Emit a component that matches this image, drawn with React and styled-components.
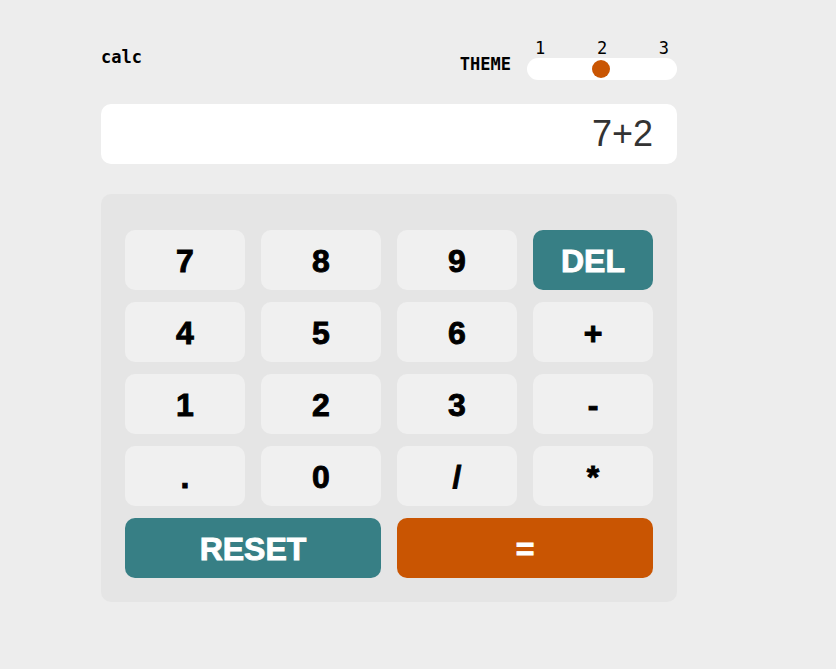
import React, { useState } from 'react';
import styled, { createGlobalStyle } from 'styled-components';

const GlobalStyle = createGlobalStyle`
  html, body {
    margin: 0;
    padding: 0;
    background: #ededed;
  }
`;

const Page = styled.div`
  width: 576px;
  margin-left: 101px;
  padding-top: 38px;
  font-family: 'Liberation Sans', Arial, sans-serif;
`;

const Header = styled.header`
  display: flex;
  justify-content: space-between;
  align-items: flex-start;
  font-family: 'DejaVu Sans Mono', monospace;
  font-size: 17px;
  color: #000;
`;

const Title = styled.h1`
  margin: 0;
  padding-top: 9px;
  font-size: 17px;
  line-height: 20px;
  font-weight: bold;
`;

const ThemeSwitch = styled.div`
  display: flex;
  align-items: flex-end;
  gap: 16px;
`;

const ThemeLabel = styled.span`
  font-weight: bold;
  line-height: 20px;
  margin-bottom: 6px;
`;

const Toggle = styled.div`
  width: 150px;
  display: flex;
  flex-direction: column;
`;

const Numbers = styled.div`
  display: flex;
  justify-content: space-between;
  padding: 0 8px 0 8px;
  line-height: 20px;
`;

const Track = styled.div`
  position: relative;
  height: 22px;
  border-radius: 11px;
  background: #fff;
`;

const Knob = styled.button`
  position: absolute;
  top: 2px;
  width: 18px;
  height: 18px;
  padding: 0;
  border: none;
  border-radius: 50%;
  background: #c95502;
  cursor: pointer;
`;

const Display = styled.div`
  margin-top: 24px;
  height: 60px;
  box-sizing: border-box;
  padding: 0 24px;
  background: #fff;
  border-radius: 10px;
  display: flex;
  align-items: center;
  justify-content: flex-end;
  font-size: 36px;
  color: #333;
`;

const Keypad = styled.div`
  margin-top: 30px;
  padding: 36px 24px 24px;
  background: #e5e5e5;
  border-radius: 10px;
  display: grid;
  grid-template-columns: repeat(4, 120px);
  grid-auto-rows: 60px;
  column-gap: 16px;
  row-gap: 12px;
`;

const Key = styled.button`
  grid-column: span ${(p) => p.$span || 1};
  border: none;
  border-radius: 10px;
  padding: 2px 0 0;
  font-family: 'Liberation Sans', Arial, sans-serif;
  font-size: 32px;
  font-weight: 900;
  -webkit-text-stroke: 0.9px currentColor;
  cursor: pointer;
  background: ${(p) => (p.$tone === 'teal' ? '#377f85' : p.$tone === 'orange' ? '#c95502' : '#f0f0f0')};
  color: ${(p) => (p.$tone ? '#fff' : '#000')};
`;

const keys = ['7', '8', '9', 'DEL', '4', '5', '6', '+', '1', '2', '3', '-', '.', '0', '/', '*'];

export default function App() {
  const [theme, setTheme] = useState(2);
  const [value] = useState('7+2');
  const knobLeft = 11 + (theme - 1) * 63 - 9;

  return (
    <>
      <GlobalStyle />
      <Page>
        <Header>
          <Title>calc</Title>
          <ThemeSwitch>
            <ThemeLabel>THEME</ThemeLabel>
            <Toggle>
              <Numbers>
                <span>1</span>
                <span>2</span>
                <span>3</span>
              </Numbers>
              <Track>
                <Knob
                  style={{ left: knobLeft }}
                  onClick={() => setTheme((theme % 3) + 1)}
                  aria-label="switch theme"
                />
              </Track>
            </Toggle>
          </ThemeSwitch>
        </Header>
        <Display>{value}</Display>
        <Keypad>
          {keys.map((k) => (
            <Key key={k} $tone={k === 'DEL' ? 'teal' : undefined}>
              {k}
            </Key>
          ))}
          <Key $span={2} $tone="teal">RESET</Key>
          <Key $span={2} $tone="orange">=</Key>
        </Keypad>
      </Page>
    </>
  );
}
